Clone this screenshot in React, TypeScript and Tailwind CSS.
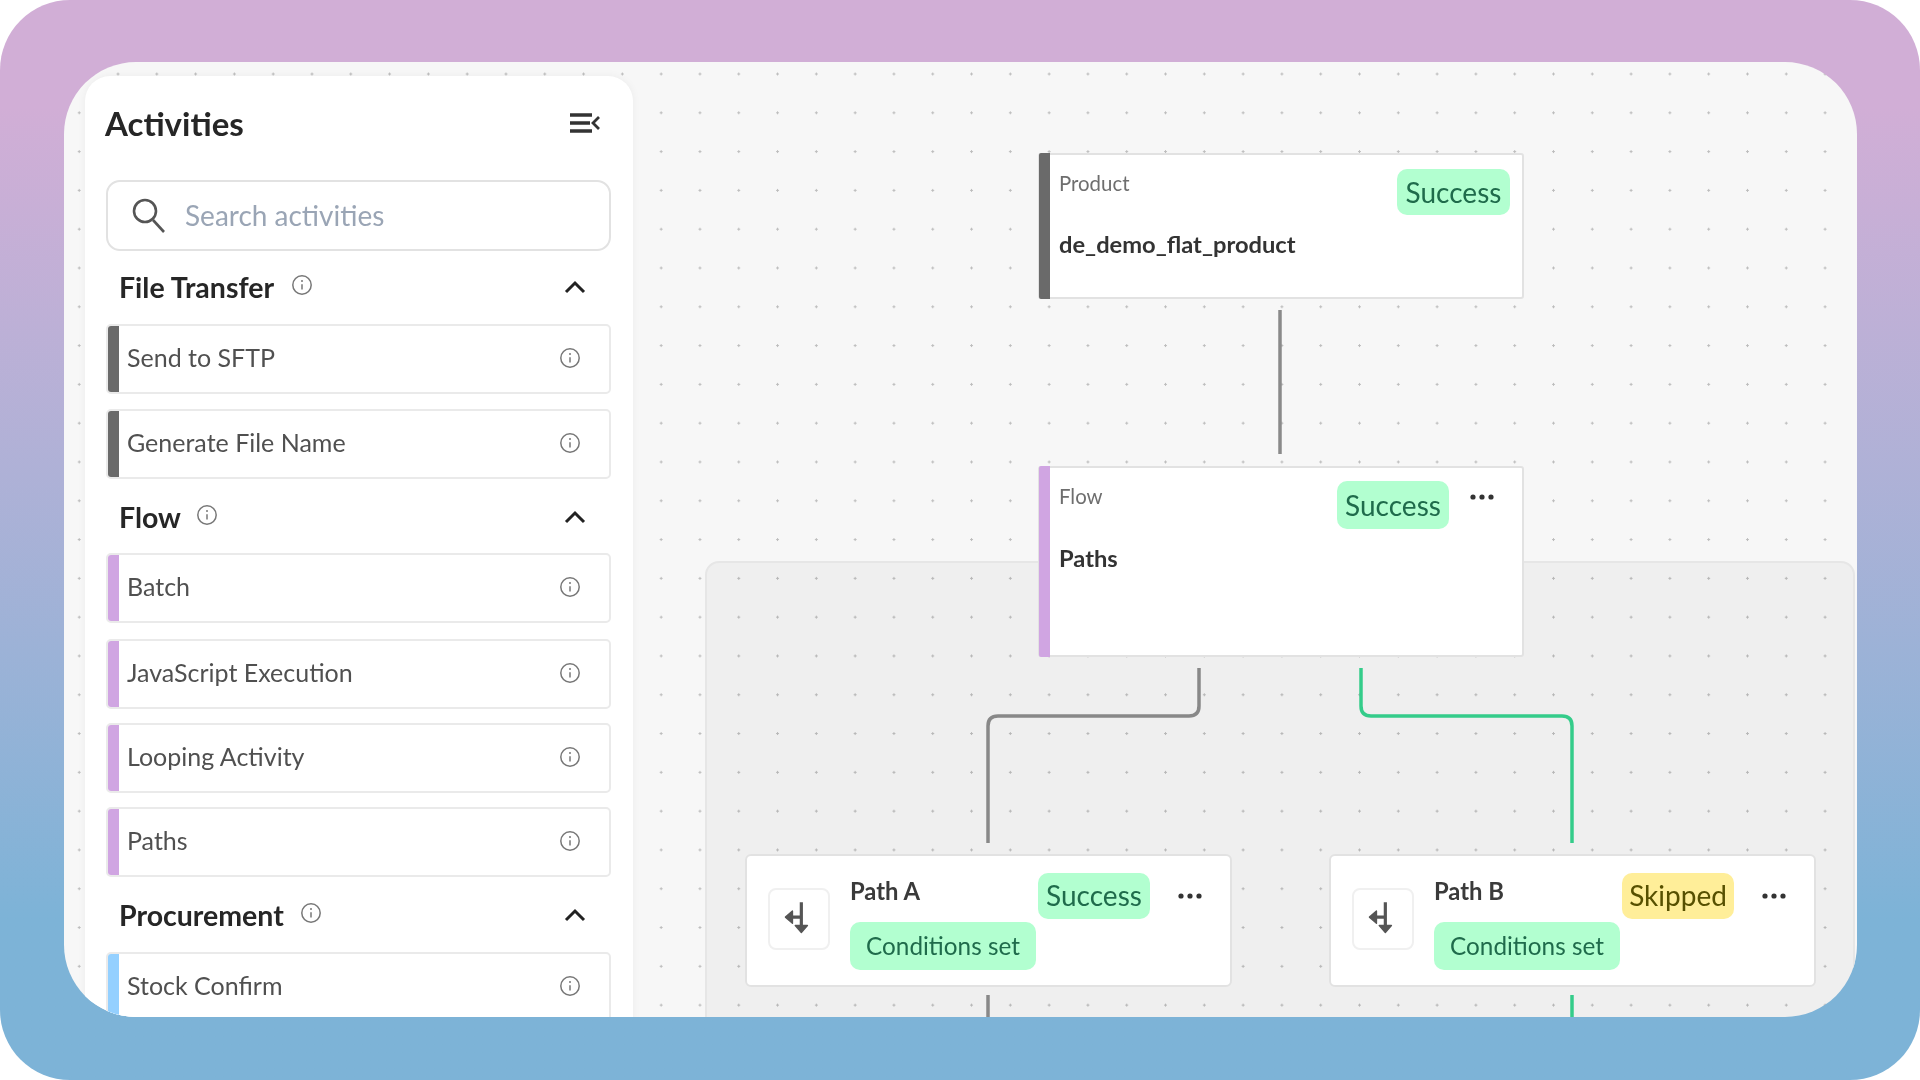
import React from "react";

const Info = ({ className = "" }: { className?: string }) => (
  <svg viewBox="0 0 22 22" className={"h-[22px] w-[22px] shrink-0 " + className} fill="none">
    <circle cx="11" cy="11" r="9.2" stroke="#777" strokeWidth="1.5" />
    <path d="M11 10.2v5.4" stroke="#777" strokeWidth="1.5" />
    <circle cx="11" cy="7" r="1" fill="#777" />
  </svg>
);

const Chevron = () => (
  <svg viewBox="0 0 24 16" className="h-[16px] w-[24px]" fill="none">
    <path d="M3 13 12 4l9 9" stroke="#222" strokeWidth="3" />
  </svg>
);

const Dots = ({ color = "#333" }: { color?: string }) => (
  <svg viewBox="0 0 24 6" className="h-[6px] w-[24px] shrink-0">
    <circle cx="3" cy="3" r="2.6" fill={color} />
    <circle cx="12" cy="3" r="2.6" fill={color} />
    <circle cx="21" cy="3" r="2.6" fill={color} />
  </svg>
);

const Row = ({ label, bar, mt }: { label: string; bar: string; mt: string }) => (
  <div className={"flex h-[70px] shrink-0 items-stretch overflow-hidden rounded-[5px] border-2 border-[#eaeaea] bg-white " + mt}>
    <div className={"-my-[2px] -ml-[1px] w-[12px] shrink-0 rounded-l-[4px] " + bar} />
    <div className="flex flex-1 items-center justify-between pl-[8px] pr-[28px]">
      <span className="-mt-[4px] text-[25px] leading-none text-[#505050]">{label}</span>
      <Info className="-mt-[2px]" />
    </div>
  </div>
);

const Header = ({ label, gap, mt }: { label: string; gap: string; mt: string }) => (
  <div className={"flex h-[40px] shrink-0 items-center justify-between pl-[13px] pr-[24px] " + mt}>
    <div className={"flex items-center " + gap}>
      <span className="text-[28.5px] font-bold leading-none text-[#262626]">{label}</span>
      <Info className="-mt-[4px]" />
    </div>
    <Chevron />
  </div>
);

const Badge = ({ children, size, text = "text-[28px]", yellow }: { children: string; size: string; text?: string; yellow?: boolean }) => (
  <span
    className={
      "flex items-center justify-center rounded-[10px] leading-none " +
      text + " " +
      size +
      (yellow ? " bg-[#ffee99] text-[#575000]" : " bg-[#b2ffd0] text-[#1f6b4b]")
    }
  >
    {children}
  </span>
);

const BranchIcon = () => (
  <svg viewBox="0 0 62 62" className="h-full w-full" fill="none">
    <path d="M33.5 13v30" stroke="#555" strokeWidth="3.4" />
    <path d="M27 38l6.5 7.5L40 38z" fill="#555" stroke="#555" strokeWidth="1.5" strokeLinejoin="round" />
    <path d="M21 29h12" stroke="#555" strokeWidth="3.4" />
    <path d="M24 22.5 16.5 29l7.5 6.5z" fill="#555" stroke="#555" strokeWidth="1.5" strokeLinejoin="round" />
  </svg>
);

const PathNode = ({ name, status, yellow, left }: { name: string; status: string; yellow?: boolean; left: string }) => (
  <div className={"absolute top-[792px] flex h-[133px] w-[487px] rounded-[6px] border-2 border-[#e2e2e2] bg-white pl-[21px] pt-[17px] " + left}>
    <div className="mt-[15px] h-[62px] w-[62px] shrink-0 rounded-[8px] border-2 border-[#f0f0f0]">
      <BranchIcon />
    </div>
    <div className="ml-[20px] flex flex-1 flex-col gap-[3px]">
      <div className="flex items-start">
        <span className="mt-[5px] w-[188px] text-[23.8px] font-bold leading-[26px] text-[#3a3a3a]">{name}</span>
        <Badge size="h-[46px] w-[112px] pb-[2px]" yellow={yellow}>{status}</Badge>
        <span className="ml-[28px] mt-[20px]"><Dots /></span>
      </div>
      <Badge size="h-[48px] w-[186px]" text="text-[24.3px]">Conditions set</Badge>
    </div>
  </div>
);

export default function App() {
  return (
    <div className="h-[1080px] w-[1920px] overflow-hidden bg-white font-['Lato',sans-serif]">
      <div className="h-full w-full rounded-[70px] bg-linear-to-b from-[#d1aed6] from-[10%] to-[#7db3d7] to-[85%] pb-[63px] pl-[64px] pr-[63px] pt-[62px] blur-[0.7px]">
        <div className="relative h-full w-full overflow-hidden rounded-[72px] bg-[#f7f7f7] bg-[radial-gradient(circle,#bdbdbd_1.1px,transparent_1.4px)] bg-[size:38.8px_38.8px] bg-[position:-4.2px_-7.4px] pl-[21px] pt-[14px]">
          {/* Paths group */}
          <div className="absolute left-[641px] top-[499px] h-[520px] w-[1150px] rounded-[14px] border-2 border-[#e6e6e6] bg-black/[0.03]" />

          {/* Connectors */}
          <svg className="absolute left-0 top-0 h-[955px] w-[1793px]" viewBox="0 0 1793 955" fill="none">
            <path d="M1216 248v144" stroke="#8a8a8a" strokeWidth="3.5" />
            <path d="M1135 606v38q0 10-10 10H934q-10 0-10 10v117" stroke="#888" strokeWidth="3.5" />
            <path d="M924 933v30" stroke="#888" strokeWidth="3.5" />
            <path d="M1297 606v38q0 10 10 10h191q10 0 10 10v117" stroke="#34cc8a" strokeWidth="3.5" />
            <path d="M1508 933v30" stroke="#34cc8a" strokeWidth="3.5" />
          </svg>

          {/* Product node */}
          <div className="absolute left-[974px] top-[91px] flex h-[146px] w-[486px] rounded-[3px] border-2 border-[#e2e2e2] bg-white">
            <div className="-my-[2px] -ml-[1px] w-[11px] shrink-0 rounded-l-[2px] bg-[#6a6a6a]" />
            <div className="flex flex-1 flex-col pl-[9px] pr-[12px] pt-[14px]">
              <div className="flex items-start justify-between">
                <span className="mt-[3px] text-[20.4px] leading-[22px] text-[#6e6e6e]">Product</span>
                <Badge size="h-[46px] w-[113px]">Success</Badge>
              </div>
              <span className="mt-[14px] text-[23.7px] font-bold leading-[30px] text-[#333]">de_demo_flat_product</span>
            </div>
          </div>

          {/* Flow node */}
          <div className="absolute left-[974px] top-[404px] flex h-[191px] w-[486px] rounded-[3px] border-2 border-[#e2e2e2] bg-white">
            <div className="-my-[2px] -ml-[1px] w-[11px] shrink-0 rounded-l-[2px] bg-[#d0a5e2]" />
            <div className="flex flex-1 flex-col pl-[9px] pr-[28px] pt-[13px]">
              <div className="flex items-start">
                <span className="mt-[4px] flex-1 text-[20.4px] leading-[22px] text-[#6e6e6e]">Flow</span>
                <Badge size="h-[48px] w-[112px]">Success</Badge>
                <span className="ml-[21px] mt-[13px]"><Dots /></span>
              </div>
              <span className="mt-[14px] text-[23.7px] font-bold leading-[30px] text-[#333]">Paths</span>
            </div>
          </div>

          <PathNode name="Path A" status="Success" left="left-[681px]" />
          <PathNode name="Path B" status="Skipped" yellow left="left-[1265px]" />

          {/* Activities sidebar */}
          <aside className="relative flex h-[1000px] w-[548px] flex-col rounded-[25px] bg-white pl-[21px] pr-[22px] shadow-[0_0_8px_rgba(0,0,0,0.05)]">
            <div className="flex h-[94px] shrink-0 items-center justify-between pr-[11px]">
              <span className="-ml-[1px] text-[33px] font-bold leading-none text-[#262626]">Activities</span>
              <svg viewBox="0 0 30 22" className="h-[22px] w-[30px]" fill="none">
                <path d="M0 3h22M0 11h20M0 19h22" stroke="#333" strokeWidth="3.6" />
                <path d="M29 5l-6 6 6 6" stroke="#333" strokeWidth="2.8" />
              </svg>
            </div>
            <div className="mt-[10px] flex h-[71px] shrink-0 items-center rounded-[14px] border-[2.5px] border-[#e2e2e2] pl-[23px]">
              <svg viewBox="0 0 36 38" className="h-[38px] w-[36px] shrink-0" fill="none">
                <circle cx="14" cy="14" r="11" stroke="#555" strokeWidth="2.6" />
                <path d="M22 23l11 12" stroke="#555" strokeWidth="2.6" />
              </svg>
              <span className="-mt-[2px] ml-[18px] text-[28px] leading-none text-[#9aa5b5]">Search activities</span>
            </div>
            <Header label="File Transfer" gap="gap-[17px]" mt="mt-[16px]" />
            <Row label="Send to SFTP" bar="bg-[#6a6a6a]" mt="mt-[17px]" />
            <Row label="Generate File Name" bar="bg-[#6a6a6a]" mt="mt-[15px]" />
            <Header label="Flow" gap="gap-[15px]" mt="mt-[18px]" />
            <Row label="Batch" bar="bg-[#d0a5e2]" mt="mt-[16px]" />
            <Row label="JavaScript Execution" bar="bg-[#d0a5e2]" mt="mt-[16px]" />
            <Row label="Looping Activity" bar="bg-[#d0a5e2]" mt="mt-[14px]" />
            <Row label="Paths" bar="bg-[#d0a5e2]" mt="mt-[14px]" />
            <Header label="Procurement" gap="gap-[16px]" mt="mt-[18px]" />
            <Row label="Stock Confirm" bar="bg-[#94d0ff]" mt="mt-[17px]" />
          </aside>
        </div>
      </div>
    </div>
  );
}
